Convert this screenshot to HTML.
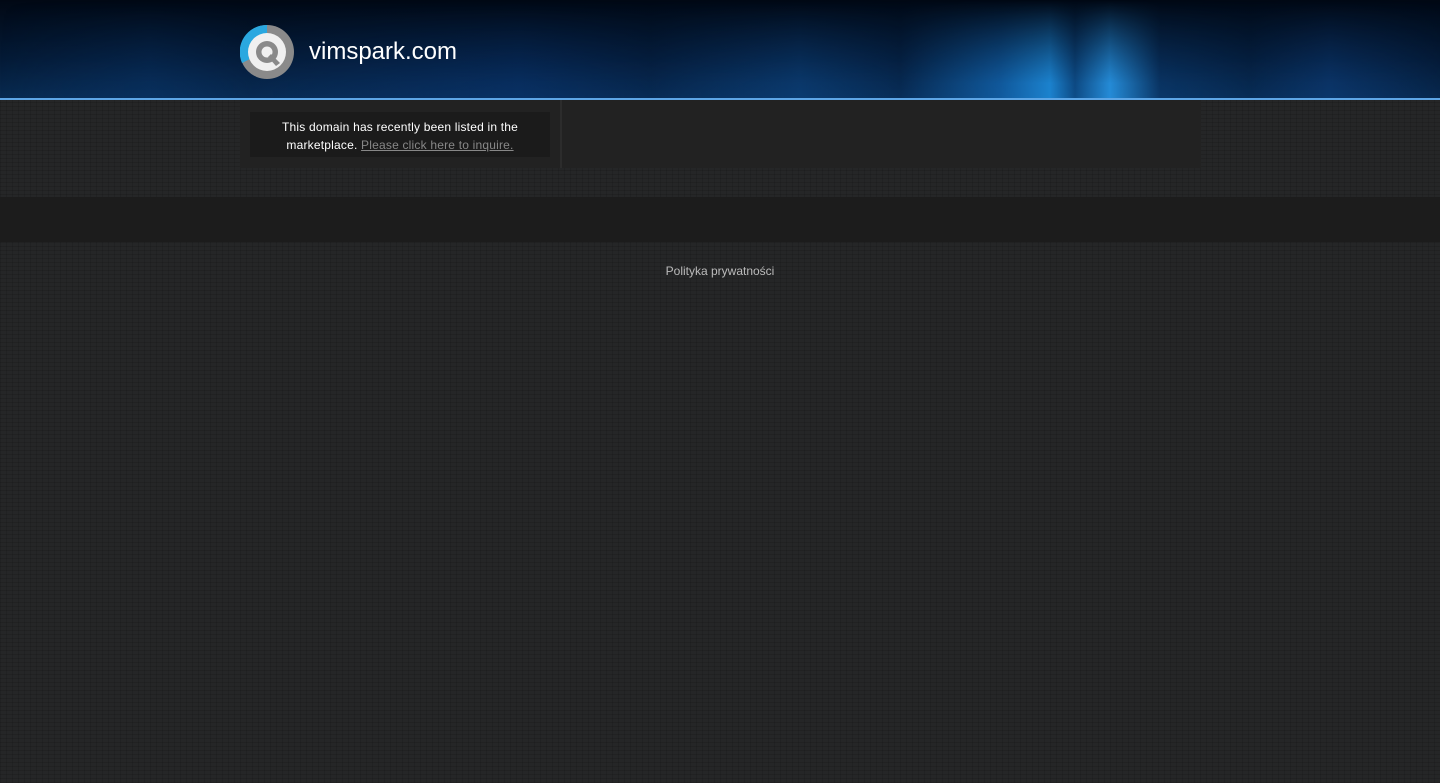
<!DOCTYPE html>
<html><head><meta charset="utf-8"><style>
html,body{margin:0;padding:0;width:1440px;height:783px;overflow:hidden;background:#232425;font-family:"Liberation Sans",Arial,sans-serif}
body{background:
repeating-linear-gradient(0deg,rgba(0,0,0,.12) 0 1px,transparent 1px 4px),
repeating-linear-gradient(90deg,rgba(0,0,0,.1) 0 1px,transparent 1px 6px),#252627}
.hdr{position:absolute;left:0;top:0;width:1440px;height:98px;overflow:hidden;
background:linear-gradient(#010814,#041a36 60%,#082a50);}
.streaks{position:absolute;left:0;top:0;width:1440px;height:98px;
background:linear-gradient(90deg,
rgba(10,60,120,.0) 0px,rgba(10,60,120,.35) 150px,rgba(10,50,110,.1) 250px,rgba(10,60,130,.4) 520px,rgba(10,50,110,.15) 650px,
rgba(15,80,150,.45) 800px,rgba(10,60,120,.2) 900px,rgba(20,110,190,.7) 1000px,rgba(30,140,220,.9) 1050px,rgba(20,110,190,.5) 1075px,rgba(40,150,230,.9) 1110px,
rgba(15,80,150,.35) 1160px,rgba(10,60,120,.15) 1250px,rgba(15,70,140,.45) 1330px,rgba(5,30,70,.1) 1440px);
-webkit-mask-image:linear-gradient(transparent,#000 85%);mask-image:linear-gradient(transparent,#000 85%)}
.line{position:absolute;left:0;top:98px;width:1440px;height:2px;background:#5ea6e6}
.logo{position:absolute;left:240px;top:25px}
.name{position:absolute;left:309px;top:38px;color:#fff;font-size:24px}
.panel{position:absolute;left:240px;top:100px;width:961px;height:68px;background:#222}
.sep{position:absolute;left:560px;top:100px;width:2px;height:68px;background:#2c2c2c}
.box{position:absolute;left:250px;top:112px;width:300px;height:45px;background:#1b1b1b;color:#fff;font-size:12px;text-align:center;line-height:18px;padding-top:6px;box-sizing:border-box;letter-spacing:.2px}
.box a{color:#888;text-decoration:underline}
.bar{position:absolute;left:0;top:197px;width:1440px;height:45px;background:#1c1c1c}
.pp{position:absolute;left:0;width:1440px;top:264px;text-align:center;color:#bbb;font-size:12px}
</style></head><body>
<div class="hdr"><div class="streaks"></div></div><div class="line"></div>
<svg class="logo" width="54" height="54" viewBox="0 0 54 54">
<circle cx="27" cy="27" r="27" fill="#8a8a8a"/>
<path d="M27 0 A27 27 0 0 0 2 38 L12 33 A16 16 0 0 1 27 11 Z" fill="#2aa8e0"/>
<circle cx="27" cy="27" r="19" fill="#f0f0f0"/>
<circle cx="27" cy="27" r="11" fill="#8a8a8a"/>
<circle cx="27" cy="27" r="5.5" fill="#f0f0f0"/>
<path d="M31 29 L40 38 L36 41 L28 32 Z" fill="#8a8a8a"/>
</svg>
<div class="name">vimspark.com</div>
<div class="panel"></div><div class="sep"></div>
<div class="box">This domain has recently been listed in the<br>marketplace. <a>Please click here to inquire.</a></div>
<div class="bar"></div>
<div class="pp">Polityka prywatności</div>
</body></html>
